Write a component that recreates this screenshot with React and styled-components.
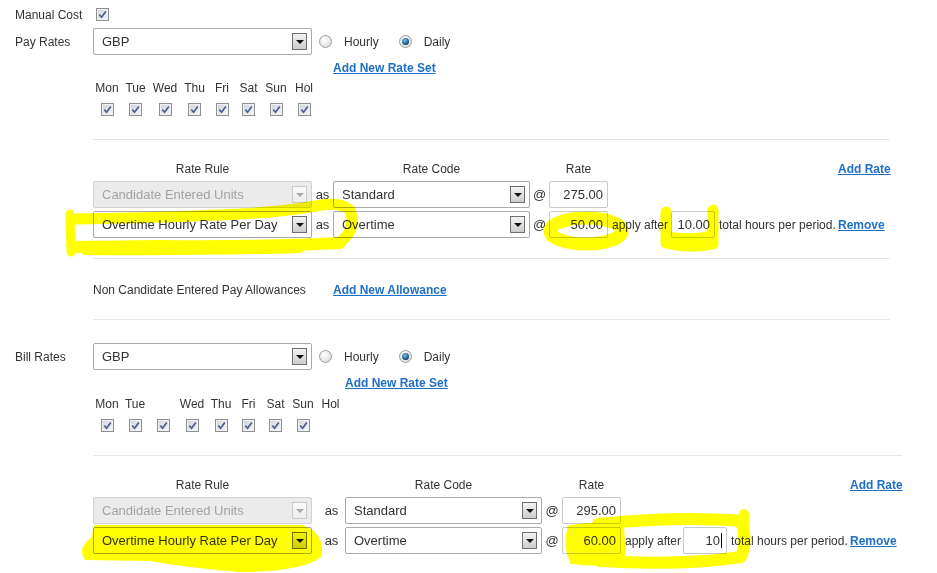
import styled, { createGlobalStyle } from "styled-components"

const GlobalStyle = createGlobalStyle`
  body {
    margin: 0;
    background: #fff;
  }
  * {
    box-sizing: border-box;
  }
`;

const Page = styled.div`
  position: relative;
  width: 937px;
  height: 573px;
  overflow: hidden;
  padding: 7px 0 0 15px;
  background: #fff;
  font-family: "Liberation Sans", Arial, sans-serif;
  font-size: 12px;
  color: #333;
`;

const FieldRow = styled.div`
  display: flex;
  align-items: center;
  height: ${p => p.$h || 14}px;
  margin-top: ${p => p.$mt || 0}px;
`;

const Label = styled.div`
  width: 78px;
  flex: none;
  line-height: 14px;
`;

const CheckBox = styled.span`
  display: inline-flex;
  align-items: center;
  justify-content: center;
  width: 13px;
  height: 13px;
  margin-left: ${p => p.$ml || 0}px;
  border: 1px solid #8e8f8f;
  background: linear-gradient(135deg, #cfd3d8, #f6f7f8);
  box-shadow: inset 0 0 0 1px #eef0f2;
`;

const SelectBox = styled.div`
  display: flex;
  align-items: center;
  width: ${p => p.$w}px;
  height: 27px;
  flex: none;
  padding-left: 8px;
  border: 1px solid ${p => (p.$disabled ? "#d2d2d2" : "#a9a9a9")};
  border-radius: 2px;
  background: ${p => (p.$disabled ? "#ebebeb" : "#fff")};
  color: ${p => (p.$disabled ? "#a3a3a3" : "#333")};
  font-size: 13px;
`;

const DropButton = styled.span`
  display: flex;
  align-items: center;
  justify-content: center;
  width: 15px;
  height: 17px;
  margin-left: auto;
  margin-right: 4px;
  border: 1px solid ${p => (p.$disabled ? "#c9c9c9" : "#6f6f6f")};
  background: ${p =>
    p.$disabled
      ? "linear-gradient(#fafafa, #ececec)"
      : "linear-gradient(#f3f3f3, #cdcdcd)"};

  &::after {
    content: "";
    border-left: 4px solid transparent;
    border-right: 4px solid transparent;
    border-top: 4px solid ${p => (p.$disabled ? "#a8a8a8" : "#111")};
  }
`;

const RadioGroup = styled.div`
  display: flex;
  align-items: center;
  margin-left: 7px;
`;

const RadioDot = styled.span`
  display: flex;
  align-items: center;
  justify-content: center;
  width: 13px;
  height: 13px;
  border-radius: 50%;
  border: 1px solid #9c9c9c;
  background: radial-gradient(circle at 40% 35%, #ffffff, #d4d4d4);

  &::after {
    content: "";
    display: ${p => (p.$checked ? "block" : "none")};
    width: 7px;
    height: 7px;
    border-radius: 50%;
    background: radial-gradient(circle at 40% 35%, #7cc0ea, #0f4a7a 70%);
  }
`;

const RadioText = styled.span`
  margin: 0 20px 0 12px;
`;

const Link = styled.a`
  color: #1f6fc6;
  font-weight: bold;
  text-decoration: underline;
  cursor: pointer;
`;

const LinkRow = styled.div`
  line-height: 14px;
  margin-top: ${p => p.$mt}px;
  padding-left: ${p => p.$pl}px;
`;

const DayGrid = styled.div`
  display: grid;
  grid-template-columns: ${p => p.$cols};
  row-gap: 8px;
  justify-items: center;
  align-items: center;
  margin: ${p => p.$mt}px 0 0 78px;
  line-height: 14px;
`;

const Divider = styled.div`
  width: ${p => p.$w}px;
  height: 1px;
  margin: ${p => p.$mt}px 0 0 78px;
  background: #e6e6e6;
`;

const RateGrid = styled.div`
  display: grid;
  grid-template-columns: 219px ${p => p.$as}px 197px ${p => p.$at}px 59px ${p => p.$apply}px 44px ${p => p.$total}px auto;
  row-gap: 3px;
  align-items: center;
  margin: ${p => p.$mt}px 0 0 78px;
`;

const Head = styled.div`
  grid-column: ${p => p.$col};
  line-height: 14px;
  margin-bottom: 2px;
  text-align: ${p => (p.$left ? "left" : "center")};
`;

const Joiner = styled.span`
  text-align: center;
  font-size: 13px;
  padding-left: ${p => p.$pl || 0}px;
`;

const RateInput = styled.div`
  display: flex;
  align-items: center;
  justify-content: flex-end;
  height: 27px;
  padding-right: 4px;
  border: 1px solid #c9c9c9;
  border-radius: 2px;
  background: #fff;
  font-size: 13px;
  color: #333;
`;

const Caret = styled.span`
  width: 1px;
  height: 15px;
  margin-left: 1px;
  background: #000;
`;

const Note = styled.span`
  padding-left: 4px;
  white-space: nowrap;
`;

const AllowanceRow = styled.div`
  display: flex;
  line-height: 14px;
  margin: 24px 0 0 78px;

  span {
    width: 240px;
  }
`;

const Overlay = styled.svg`
  position: absolute;
  left: 0;
  top: 0;
  pointer-events: none;
  mix-blend-mode: multiply;
`;

const Tick = () => (
  <svg width="9" height="9" viewBox="0 0 9 9">
    <path d="M1.3 4.6 L3.6 7.2 L7.8 1.4" stroke="#4b5d8f" strokeWidth="1.7" fill="none" />
  </svg>
);

const Select = ({ w, value, disabled }) => (
  <SelectBox $w={w} $disabled={disabled}>
    {value}
    <DropButton $disabled={disabled} />
  </SelectBox>
);

const RatesBlock = ({ title, mt, linkMt, dayMt, dayCols, days, checks, t }) => (
  <>
    <FieldRow $h={27} $mt={mt}>
      <Label>{title}</Label>
      <Select w={219} value="GBP" />
      <RadioGroup>
        <RadioDot />
        <RadioText>Hourly</RadioText>
        <RadioDot $checked />
        <RadioText>Daily</RadioText>
      </RadioGroup>
    </FieldRow>
    <LinkRow $mt={linkMt} $pl={78 + 219 + t.as}>
      <Link>Add New Rate Set</Link>
    </LinkRow>
    <DayGrid $cols={dayCols} $mt={dayMt}>
      {days.map((d, i) => (
        <span key={"d" + i}>{d}</span>
      ))}
      {Array.from({ length: checks }).map((_, i) => (
        <CheckBox key={"c" + i}>
          <Tick />
        </CheckBox>
      ))}
    </DayGrid>
    <Divider $w={t.line} $mt={23} />
    <RateGrid $as={t.as} $at={t.at} $apply={t.apply} $total={t.total} $mt={22}>
      <Head $col={1}>Rate Rule</Head>
      <Head $col={3}>Rate Code</Head>
      <Head $col={5}>Rate</Head>
      <Head $col={9} $left>
        <Link>Add Rate</Link>
      </Head>

      <Select w={219} value="Candidate Entered Units" disabled />
      <Joiner $pl={t.asPad}>as</Joiner>
      <Select w={197} value="Standard" />
      <Joiner>@</Joiner>
      <RateInput>{t.base}</RateInput>
      <span />
      <span />
      <span />
      <span />

      <Select w={219} value="Overtime Hourly Rate Per Day" />
      <Joiner $pl={t.asPad}>as</Joiner>
      <Select w={197} value="Overtime" />
      <Joiner>@</Joiner>
      <RateInput>{t.over}</RateInput>
      <Note>apply after</Note>
      <RateInput>
        {t.after}
        {t.caret && <Caret />}
      </RateInput>
      <Note>total hours per period.</Note>
      <Link>Remove</Link>
    </RateGrid>
  </>
);

const payTable = { as: 21, asPad: 0, at: 19, apply: 63, total: 123, line: 797, base: "275.00", over: "50.00", after: "10.00" };
const billTable = { as: 33, asPad: 6, at: 20, apply: 62, total: 123, line: 809, base: "295.00", over: "60.00", after: "10", caret: true };

const Highlights = () => (
  <Overlay width="937" height="573" viewBox="0 0 937 573">
    <g fill="none" stroke="#ffff00" strokeLinecap="round" strokeLinejoin="round">
      <path strokeWidth="9" d="M71 252 L70 214" />
      <path strokeWidth="11" d="M76 219 Q160 218 240 214 Q290 211 315 206 Q340 201 350 210 Q357 230 340 242" />
      <path strokeWidth="12" d="M340 243 Q260 247 160 246 L74 247" />
      <path strokeWidth="6" d="M85 252 Q200 253 300 250" />
      <ellipse strokeWidth="13" cx="586" cy="231" rx="36" ry="13" />
      <path strokeWidth="11" d="M666 212 L666 243 Q690 249 713 244 L713 210" />
      <path strokeWidth="9" d="M668 236 Q690 240 710 235" />
      <path strokeWidth="12" d="M598 524 Q680 516 741 521 Q748 540 741 557 Q680 566 600 561" />
      <path strokeWidth="10" d="M743 552 L744 514" />
    </g>
    <g fill="#ffff00" stroke="#ffff00" strokeWidth="4" strokeLinejoin="round">
      <path d="M96 527 L302 527 Q322 534 320 555 Q302 570 240 570 Q190 566 150 559 L86 558 Q80 548 93 539 Z" />
      <path d="M570 527 Q600 522 622 527 L624 560 Q600 566 572 562 Q564 545 570 527 Z" />
    </g>
  </Overlay>
);

const App = () => {
  return (
    <Page>
      <GlobalStyle />
      <FieldRow $h={15}>
        <Label>Manual Cost</Label>
        <CheckBox $ml={3}>
          <Tick />
        </CheckBox>
      </FieldRow>

      <RatesBlock
        title="Pay Rates"
        mt={6}
        linkMt={6}
        dayMt={6}
        dayCols="28px 29px 30px 29px 26px 27px 28px 28px"
        days={["Mon", "Tue", "Wed", "Thu", "Fri", "Sat", "Sun", "Hol"]}
        checks={8}
        t={payTable}
      />

      <Divider $w={797} $mt={20} />
      <AllowanceRow>
        <span>Non Candidate Entered Pay Allowances</span>
        <Link>Add New Allowance</Link>
      </AllowanceRow>
      <Divider $w={797} $mt={22} />

      <RatesBlock
        title="Bill Rates"
        mt={23}
        linkMt={6}
        dayMt={7}
        dayCols="28px 28px 28px 30px 28px 27px 27px 28px 27px"
        days={["Mon", "Tue", "", "Wed", "Thu", "Fri", "Sat", "Sun", "Hol"]}
        checks={8}
        t={billTable}
      />

      <Highlights />
    </Page>
  )
}

export default App
